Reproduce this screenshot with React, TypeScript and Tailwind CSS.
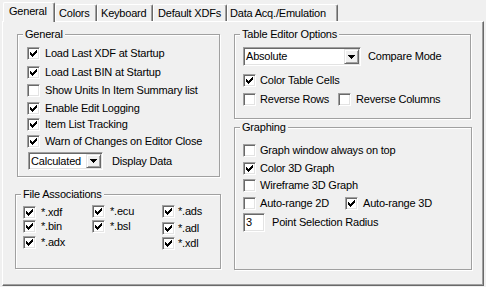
import type { ReactNode } from "react";

function Check({ checked }: { checked?: boolean }) {
  return (
    <span className="flex h-[13px] w-[13px] shrink-0 items-center justify-center border border-t-[#a0a0a0] border-l-[#a0a0a0] border-b-white border-r-white bg-white shadow-[inset_1px_1px_0_#696969,inset_-1px_-1px_0_#e3e3e3]">
      {checked && (
        <svg width="7" height="7" viewBox="0 0 7 7" shapeRendering="crispEdges">
          <path
            fill="#000"
            d="M6 0h1v1h-1z M5 1h2v1h-2z M0 2h1v1h-1z M4 2h3v1h-3z M0 3h2v1h-2z M3 3h3v1h-3z M0 4h5v1h-5z M1 5h3v1h-3z M2 6h1v1h-1z"
          />
        </svg>
      )}
    </span>
  );
}

function Row({
  label,
  checked,
  className = "",
  gap = "ml-[5px]",
}: {
  label: string;
  checked?: boolean;
  className?: string;
  gap?: string;
}) {
  return (
    <div className={"flex h-[13px] items-center whitespace-nowrap " + className}>
      <Check checked={checked} />
      <span className={gap + " leading-[13px]"}>{label}</span>
    </div>
  );
}

function Group({
  label,
  className,
  children,
}: {
  label: string;
  className: string;
  children: ReactNode;
}) {
  return (
    <div
      className={
        "relative shrink-0 border border-[#a0a0a0] shadow-[1px_1px_0_#fff,inset_1px_1px_0_#fff] " +
        className
      }
    >
      <span className="absolute -top-[8px] left-[5px] bg-[#f0f0f0] px-[2px] leading-[14px]">
        {label}
      </span>
      {children}
    </div>
  );
}

function Combo({ value, className }: { value: string; className: string }) {
  return (
    <div
      className={
        "flex shrink-0 items-stretch border border-t-[#a0a0a0] border-l-[#a0a0a0] border-b-white border-r-white bg-white p-[1px] shadow-[inset_1px_1px_0_#696969,inset_-1px_-1px_0_#e3e3e3] " +
        className
      }
    >
      <span className="flex-1 pl-[1px] leading-[14px]">{value}</span>
      <span className="flex w-[15px] items-center justify-center border border-t-[#e3e3e3] border-l-[#e3e3e3] border-b-[#696969] border-r-[#696969] bg-[#f0f0f0] shadow-[inset_1px_1px_0_#fff,inset_-1px_-1px_0_#a0a0a0]">
        <svg width="7" height="4" viewBox="0 0 7 4" shapeRendering="crispEdges">
          <path fill="#000" d="M0 0h7v1h-7z M1 1h5v1h-5z M2 2h3v1h-3z M3 3h1v1h-1z" />
        </svg>
      </span>
    </div>
  );
}

const tabs = [
  { name: "General", w: "w-[52px]", pl: "pl-[5px]" },
  { name: "Colors", w: "w-[42px]", pl: "pl-[3px]" },
  { name: "Keyboard", w: "w-[56px]", pl: "pl-[3px]" },
  { name: "Default XDFs", w: "w-[74px]", pl: "pl-[4px]" },
  { name: "Data Acq./Emulation", w: "w-[111px]", pl: "pl-[2px]" },
];

export default function App() {
  return (
    <div className="h-[287px] w-[486px] overflow-hidden bg-[#f0f0f0] px-[2px] pt-[2px] font-['Liberation_Sans',Arial,sans-serif] text-[11px] tracking-[-0.2px] text-black">
      {/* Tabs */}
      <div className="flex h-[19px] items-end pl-[1px]">
        {tabs.map((t, i) =>
          i === 0 ? (
            <div
              key={t.name}
              className={`relative z-10 -mb-[1px] h-[20px] shrink-0 rounded-t-[2px] border-l border-t border-r border-l-white border-t-white border-r-[#696969] bg-[#f0f0f0] pt-[1px] leading-[14px] shadow-[inset_-1px_0_0_#a0a0a0] ${t.w} ${t.pl}`}
            >
              {t.name}
            </div>
          ) : (
            <div
              key={t.name}
              className={`h-[17px] shrink-0 rounded-t-[2px] border-l border-t border-r border-l-white border-t-white border-r-[#696969] pt-[1px] leading-[14px] whitespace-nowrap shadow-[inset_-1px_0_0_#a0a0a0] ${t.w} ${t.pl}`}
            >
              {t.name}
            </div>
          )
        )}
      </div>

      {/* Panel */}
      <div className="flex h-[265px] w-[482px] border border-t-white border-l-white border-b-[#696969] border-r-[#696969] shadow-[inset_-1px_-1px_0_#a0a0a0]">
        {/* Left column */}
        <div className="flex w-[231px] shrink-0 flex-col">
          <Group label="General" className="ml-[14px] mt-[12px] h-[143px] w-[203px] pl-[9px]">
            <Row label="Load Last XDF at Startup" checked className="mt-[12px]" />
            <Row label="Load Last BIN at Startup" checked className="mt-[6px]" />
            <Row label="Show Units In Item Summary list" className="mt-[5px]" />
            <Row label="Enable Edit Logging" checked className="mt-[5px]" />
            <Row label="Item List Tracking" checked className="mt-[3px]" />
            <Row label="Warn of Changes on Editor Close" checked className="mt-[4px]" />
            <div className="mt-[4px] flex items-center">
              <Combo value="Calculated" className="ml-[1px] h-[18px] w-[75px]" />
              <span className="ml-[9px]">Display Data</span>
            </div>
          </Group>

          <Group label="File Associations" className="ml-[12px] mt-[17px] flex h-[75px] w-[206px] pl-[7px]">
            <div className="flex w-[69px] flex-col">
              <Row label="*.xdf" checked className="mt-[11px]" />
              <Row label="*.bin" checked className="mt-[1px]" />
              <Row label="*.adx" checked className="mt-[3px]" />
            </div>
            <div className="flex w-[70px] flex-col">
              <Row label="*.ecu" checked className="mt-[10px]" />
              <Row label="*.bsl" checked className="mt-[2px]" />
            </div>
            <div className="flex flex-col">
              <Row label="*.ads" checked className="mt-[10px]" gap="ml-[3px]" />
              <Row label="*.adl" checked className="mt-[4px]" gap="ml-[3px]" />
              <Row label="*.xdl" checked className="mt-[2px]" gap="ml-[3px]" />
            </div>
          </Group>
        </div>

        {/* Right column */}
        <div className="flex flex-col">
          <Group label="Table Editor Options" className="mt-[12px] h-[85px] w-[237px] pl-[8px]">
            <div className="mt-[12px] flex items-center">
              <Combo value="Absolute" className="h-[19px] w-[118px]" />
              <span className="ml-[7px]">Compare Mode</span>
            </div>
            <Row label="Color Table Cells" checked className="mt-[8px]" gap="ml-[4px]" />
            <div className="mt-[6px] flex">
              <Row label="Reverse Rows" className="w-[95px]" gap="ml-[4px]" />
              <Row label="Reverse Columns" gap="ml-[5px]" />
            </div>
          </Group>

          <Group label="Graphing" className="mt-[8px] h-[143px] w-[238px] pl-[8px]">
            <Row label="Graph window always on top" className="mt-[16px]" gap="ml-[4px]" />
            <Row label="Color 3D Graph" checked className="mt-[5px]" gap="ml-[4px]" />
            <Row label="Wireframe 3D Graph" className="mt-[4px]" gap="ml-[4px]" />
            <div className="mt-[5px] flex">
              <Row label="Auto-range 2D" className="w-[102px]" gap="ml-[4px]" />
              <Row label="Auto-range 3D" checked gap="ml-[5px]" />
            </div>
            <div className="mt-[3px] flex items-center">
              <div className="h-[19px] w-[22px] border border-t-[#a0a0a0] border-l-[#a0a0a0] border-b-white border-r-white bg-white pl-[2px] leading-[17px] shadow-[inset_1px_1px_0_#696969,inset_-1px_-1px_0_#e3e3e3]">
                3
              </div>
              <span className="ml-[7px]">Point Selection Radius</span>
            </div>
          </Group>
        </div>
      </div>
    </div>
  );
}
